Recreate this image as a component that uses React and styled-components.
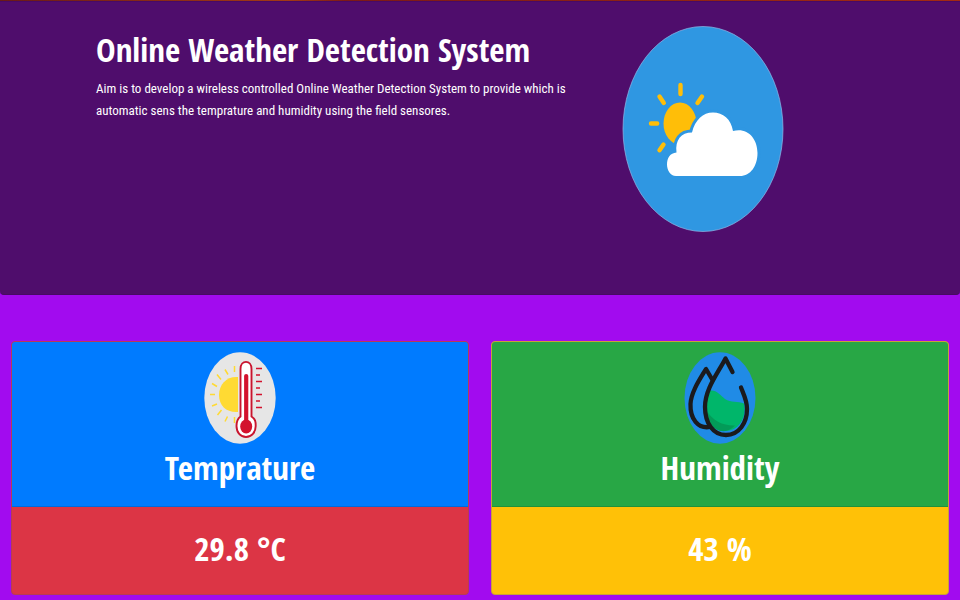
import React from "react";
import styled, { createGlobalStyle } from "styled-components";

const GlobalStyle = createGlobalStyle`
  *, *::before, *::after { box-sizing: border-box; }
  body {
    margin: 0;
    background: #a20bef;
    color: #fff;
    font-family: "Roboto Condensed", Roboto, sans-serif;
    font-size: 13px;
    line-height: 22px;
  }
`;

const headingFont = `
  font-family: "Open Sans Condensed", "Roboto Condensed", sans-serif;
  font-size: 33px;
  font-weight: 600;
  line-height: 40px;
`;

const TopStrip = styled.div`
  height: 1px;
  background: linear-gradient(90deg, #6a1a17, #a33a14 30%, #7d1a16 36%, #8f2413 70%, #a32a12);
`;

const Hero = styled.header`
  display: grid;
  grid-template-columns: 55fr 45fr;
  min-height: 294px;
  padding: 24px 0 0 10%;
  background: #4f0d6c;
  border: solid #470a66;
  border-width: 1px 0;
  border-radius: 0 0 4px 4px;
`;

const Intro = styled.div`
  padding-top: 4px;
`;

const Title = styled.h1`
  ${headingFont}
  margin: 0 0 8px;
`;

const Lead = styled.p`
  margin: 0;
  max-width: 475px;
`;

const HeroArt = styled.div`
  padding-left: 51px;
`;

const Icon = styled.svg`
  display: block;
  width: ${(p) => p.$width}px;
  height: ${(p) => p.$height}px;
`;

const Cards = styled.main`
  display: grid;
  grid-template-columns: 1fr 1fr;
  gap: 22px;
  padding: 46px 11px 5px;
`;

const Card = styled.section`
  border: 1px solid ${(p) => p.$edge};
  border-radius: 4px;
  background: ${(p) => p.$color};
  overflow: hidden;
  text-align: center;
`;

const CardHead = styled.div`
  display: flex;
  flex-direction: column;
  align-items: center;
  padding: 10px 0 18px;
  background: ${(p) => p.$color};
  border-bottom: 1px solid rgba(0, 0, 0, 0.13);
`;

const CardTitle = styled.h2`
  ${headingFont}
  margin: 4px 0 0;
`;

const Reading = styled.p`
  ${headingFont}
  margin: 0;
  padding: 22px 0 25px;
`;

function WeatherIcon() {
  return (
    <Icon $width={162} $height={206} viewBox="0 0 162 206" role="img" aria-label="Sun behind a cloud">
      <ellipse cx="81" cy="103" rx="80" ry="102.5" fill="#2f97e2" stroke="#8fb9e6" strokeWidth="0.7" />
      <path
        d="M58.5 59v9M37.5 70.500l4.300 6.500M80 70.500l-4.500 6.500M29 97.500h6.200M41.500 118.500l-4 5.800"
        stroke="#ffbe08"
        strokeWidth="4.400"
        strokeLinecap="round"
      />
      <ellipse cx="58" cy="97.500" rx="16.500" ry="21" fill="#ffbe08" />
      <path
        d="M54 150C48 150 45 144 45 138.500C45 132 48 127 54.500 126.500C53 114 59 106.500 70 106.500C73 94 81 86.500 91 86.500C101 86.500 109 93 111 105C125 101 135.500 112 135.500 127C135.500 140 128.500 150 118 150Z"
        fill="#fff"
        stroke="#2f97e2"
        strokeWidth="6"
        paintOrder="stroke"
      />
    </Icon>
  );
}

function ThermometerIcon() {
  return (
    <Icon $width={72} $height={92} viewBox="0 0 72 92" role="img" aria-label="Thermometer and sun">
      <ellipse cx="36" cy="46" rx="35.700" ry="45.700" fill="#e6e6e6" />
      <path d="M34 25C23 24 15 32 15 43S23 61 34 60Z" fill="#ffda33" />
      <path
        d="M30.500 14v6M21 17.500l3 5M13 22.500l4 5M8 31.500l5 3M6 42.500h5M8 54l5-2M13.500 63l4-5M21 69.500l2.500-5M30.500 71v-6"
        stroke="#ffda33"
        strokeWidth="1.500"
      />
      <path
        d="M36.500 17C36.500 7.500 47.500 7.500 47.500 17V64.500C51.500 67 51.700 70 51.700 74C51.700 80.500 47.500 85 42 85S32.500 80.500 32.500 74C32.500 70 33 67 36.500 64.500Z"
        fill="#fff"
        stroke="#c9152e"
        strokeWidth="1.900"
      />
      <path d="M42.200 24V73" stroke="#d3122d" strokeWidth="4.200" strokeLinecap="round" />
      <ellipse cx="42.200" cy="74.500" rx="6" ry="7" fill="#d3122d" />
      <path
        d="M52 16.500h6M52 23h4M52 29.500h6M52 36h4M52 42.500h6M52 49h4M52 55.500h6"
        stroke="#d3122d"
        strokeWidth="1.500"
      />
    </Icon>
  );
}

function HumidityIcon() {
  return (
    <Icon $width={72} $height={92} viewBox="0 0 72 92" role="img" aria-label="Water drops">
      <ellipse cx="36" cy="46" rx="35.500" ry="45.700" fill="#208be6" />
      <path d="M24.500 39C32 37 36 43 41 47C47 51 54 49 60 51.500C63 67 54 79 41 79C25 79 18 62 24.500 39Z" fill="#00b66a" />
      <path d="M22.500 58C28 69 40 74 51 73.500C39 87 21 74 22.500 58Z" fill="#039b58" />
      <g fill="none" stroke="#1b1a1c" strokeWidth="4.300" strokeLinecap="round" strokeLinejoin="round">
        <path d="M28.500 28L22 17C16 27 7 40 6.500 52C6 67 14 77 26 75" />
        <path d="M48.500 20L41.500 6.500C34 21 21 37 21 55C21 71 29 83 42 83C55 83 63 71 63 57C63 48 59 41 57 35.500" />
      </g>
    </Icon>
  );
}

function SensorCard({ title, reading, edge, headColor, color, children }) {
  return (
    <Card $edge={edge} $color={color}>
      <CardHead $color={headColor}>
        {children}
        <CardTitle>{title}</CardTitle>
      </CardHead>
      <Reading>{reading}</Reading>
    </Card>
  );
}

export default function App() {
  return (
    <>
      <GlobalStyle />
      <TopStrip />
      <Hero>
        <Intro>
          <Title>Online Weather Detection System</Title>
          <Lead>
            Aim is to develop a wireless controlled Online Weather Detection System to provide which is
            automatic sens the temprature and humidity using the field sensores.
          </Lead>
        </Intro>
        <HeroArt>
          <WeatherIcon />
        </HeroArt>
      </Hero>
      <Cards>
        <SensorCard title="Temprature" reading="29.8 °C" edge="#b63c56" headColor="#007bff" color="#dc3545">
          <ThermometerIcon />
        </SensorCard>
        <SensorCard title="Humidity" reading="43 %" edge="#c9a03a" headColor="#28a745" color="#ffc107">
          <HumidityIcon />
        </SensorCard>
      </Cards>
    </>
  );
}
